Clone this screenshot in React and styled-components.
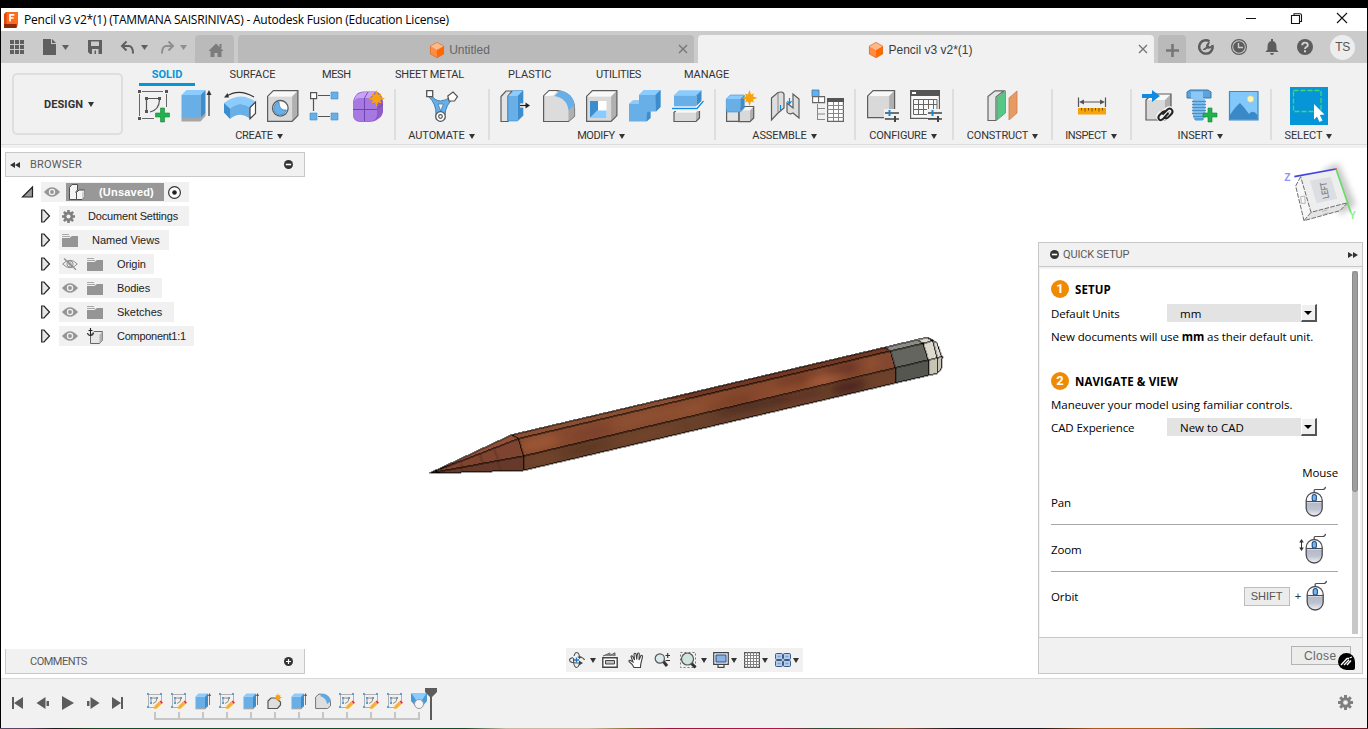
import React from "react";
import styled, { createGlobalStyle } from "styled-components";

const Global = createGlobalStyle`
  * { box-sizing: border-box; }
  body { margin: 0; font-family: "Liberation Sans", Arial, sans-serif; font-size: 11px; color: #333; overflow: hidden; }
  svg { display: block; flex: none; overflow: visible; }
`;

const UI = `Roboto, "Liberation Sans", sans-serif`;
const SEGOE = `"Open Sans", "Noto Sans", sans-serif`;

/* ---------- window ---------- */
const Window = styled.div`
  width: 1368px; height: 729px; display: flex; flex-direction: column;
  border-left: 1px solid #000; border-right: 1px solid #000; border-top: 8px solid #000;
  background: #fff;
`;
const TitleBar = styled.header`
  height: 23px; flex: none; display: flex; align-items: center; padding: 0 20px 0 3px; background: #fff;
`;
const Title = styled.div`
  font: 12px/23px ${SEGOE}; color: #000; letter-spacing: -0.21px; margin-left: 6px; flex: 1; white-space: nowrap;
`;
const WinButtons = styled.div`display: flex; align-items: center; gap: 35px; margin-top: -3px;`;

/* ---------- document tabs ---------- */
const TabBar = styled.div`
  height: 32px; flex: none; display: flex; align-items: flex-end; background: #cbcbcb;
`;
const QuickTools = styled.div`
  width: 194px; height: 32px; display: flex; align-items: center; padding-left: 9px;
`;
const Tool = styled.div`margin-left: ${(p) => p.$gap || 0}px; opacity: ${(p) => (p.$dim ? 0.55 : 1)};`;
const DocTab = styled.div`
  position: relative; width: ${(p) => p.$w}px; height: 28px; margin-right: 4px; border-radius: 4px 4px 0 0;
  background: ${(p) => (p.$active ? "#f1f1f1" : "#bababa")};
  display: flex; align-items: center; justify-content: center; gap: 5px;
  font-size: 12px; color: ${(p) => (p.$active ? "#3c3c3c" : "#666")};
  padding: 2px ${(p) => p.$shift || 0}px 0 0;
`;
const CloseMark = styled.div`position: absolute; right: 6px; top: 9px;`;
const Account = styled.div`display: flex; align-items: center; gap: 17px; height: 32px; margin-left: 8px;`;
const Avatar = styled.div`
  width: 25px; height: 25px; border-radius: 50%; background: #ededed; font: 12px/25px "Liberation Sans", sans-serif;
  color: #555; text-align: center; margin-left: 0; letter-spacing: -0.5px;
`;

/* ---------- ribbon ---------- */
const Ribbon = styled.section`
  height: 85px; flex: none; display: flex; background: #f1f1f1; border-bottom: 3px solid #f1f1f1;
  box-shadow: inset 0 -1px #dcdcdc;
`;
const DesignButton = styled.div`
  width: 111px; height: 62px; margin: 10px 6px 0 11px; border: 2px solid #dedede; border-radius: 5px;
  display: flex; align-items: center; justify-content: center; gap: 5px; font: bold 11px ${UI}; letter-spacing: 0.1px;
  padding-left: 3px;
`;
const RibbonMain = styled.div`flex: 1;`;
const RibbonTabs = styled.nav`display: flex; height: 24px; padding-left: 10px;`;
const RibbonTab = styled.div`
  width: ${(p) => p.$w}px; margin-right: ${(p) => p.$gap}px; height: 23px; text-align: center; white-space: nowrap;
  font: ${(p) => (p.$on ? "bold" : "normal")} 11px/24px ${UI}; letter-spacing: ${(p) => p.$ls || 0}px;
  color: ${(p) => (p.$on ? "#0696d7" : "#333")};
  border-bottom: ${(p) => (p.$on ? "3px solid #0696d7" : "none")};
`;
const Groups = styled.div`display: flex; padding-top: 2px;`;
const Group = styled.div`
  width: ${(p) => p.$w}px; height: 51px; border-right: ${(p) => (p.$last ? 0 : 2)}px solid #dedede;
  display: flex; flex-direction: column; align-items: center;
`;
const IconRow = styled.div`height: 32px; display: flex; align-items: center; gap: 11px; margin-top: 1px;`;
const GroupLabel = styled.div`
  display: flex; align-items: center; gap: 4px; font: 11px/14px ${UI}; letter-spacing: ${(p) => p.$ls ?? -0.1}px;
  margin: 7px ${(p) => p.$mr ?? 1}px 0 0; white-space: nowrap;
`;
const SelectTile = styled.div`width: 38px; height: 38px; background: #0696d7; margin: -2px 0 -2px;`;

/* ---------- canvas ---------- */
const Canvas = styled.main`position: relative; flex: 1; display: flex; background: #fff; overflow: hidden;`;
const Model = styled.div`position: absolute; left: 419px; top: 177px;`;
const LeftColumn = styled.aside`
  width: 304px; display: flex; flex-direction: column; padding: 4px 0 4px 4px;
`;
const PanelBar = styled.div`
  height: 25px; flex: none; display: flex; align-items: center; background: #f1f1f1; border: 1px solid #c8c8c8;
  border-top-width: ${(p) => (p.$open ? 0 : 1)}px; color: #5a5a5a; font: 11px ${UI}; padding: 0 11px 0 4px;
  letter-spacing: ${(p) => p.$ls || 0}px;
`;
const BarTitle = styled.div`flex: 1; margin-left: ${(p) => p.$x}px;`;
const Tree = styled.div`flex: 1; padding-top: 5px;`;
const TreeRow = styled.div`
  height: 20px; margin-bottom: 4px; display: flex; align-items: center; padding-left: ${(p) => p.$indent}px;
`;
const Chip = styled.div`
  width: ${(p) => p.$w}px; height: 20px; margin-left: ${(p) => p.$gap ?? 9}px; background: #f1f1f1;
  display: flex; align-items: center; padding-left: 3px; color: #222;
`;
const Unsaved = styled.div`
  width: 98px; height: 18px; margin: 0 4px 0 6px; background: #989898; color: #fff; font-weight: bold;
  display: flex; align-items: center; gap: 13px; padding-left: 3px; letter-spacing: 0.2px;
`;
const TreeLabel = styled.span`margin-left: ${(p) => p.$x}px; letter-spacing: ${(p) => p.$ls || 0}px; white-space: nowrap;`;
const FolderSlot = styled.div`margin-left: 9px;`;
const Center = styled.div`flex: 1; display: flex; align-items: flex-end; padding: 0 0 6px 261px;`;
const NavBar = styled.div`
  width: 237px; height: 24px; background: #f1f1f1; display: flex; align-items: center; padding-left: 3px;
`;
const NavItem = styled.div`width: ${(p) => p.$w}px; display: flex; align-items: center; gap: ${(p) => p.$gap ?? 5}px;`;
const RightColumn = styled.aside`width: 329px; display: flex; flex-direction: column;`;
const CubeArea = styled.div`height: 94px; flex: none; padding-top: 2px;`;

/* ---------- quick setup ---------- */
const Panel = styled.section`
  width: 325px; height: 432px; border: 1px solid #c8c8c8; background: #f1f1f1; display: flex; flex-direction: column;
`;
const PanelHead = styled.div`
  height: 24px; flex: none; display: flex; align-items: center; padding: 0 4px 0 11px; border-bottom: 1px solid #c8c8c8;
  font: 11px ${UI}; color: #5a5a5a; gap: 4px; letter-spacing: -0.15px;
`;
const PanelBody = styled.div`
  flex: 1; display: flex; margin: 2px 2px 0 1px; background: #fff; padding: 2px 2px 3px 11px;
  font: 11.5px/18px ${SEGOE}; color: #000; letter-spacing: -0.1px;
`;
const Form = styled.div`width: 287px; margin-right: 14px; padding-top: 9px;`;
const Scroll = styled.div`width: 6px; height: 363px; background: #c8c8c8;`;
const Thumb = styled.div`width: 6px; height: 221px; border-radius: 3px; background: #9e9e9e; border: 1px solid #8a8a8a;`;
const Heading = styled.div`
  height: 18px; display: flex; align-items: center; gap: 6px; margin-top: ${(p) => p.$top || 0}px;
`;
const HeadingText = styled.span`font-weight: bold; letter-spacing: 0.1px; padding-top: 2px;`;
const Num = styled.span`
  width: 18px; height: 18px; border-radius: 50%; background: #f08a00; color: #fff; text-align: center;
  font: bold 13px/18px ${UI};
`;
const Field = styled.div`height: 18px; margin-top: ${(p) => p.$top}px; display: flex; align-items: center; white-space: nowrap;`;
const FieldName = styled.span`width: 116px; line-height: 20px; padding-top: 1px;`;
const Select = styled.div`
  width: 150px; height: 18px; background: #e3e3e3; padding-left: 13px; display: flex; justify-content: space-between;
  line-height: 19px; letter-spacing: 0;
`;
const DropButton = styled.div`
  width: 16px; height: 18px; background: #f0f0f0; border: 1px solid #fff; border-right: 2px solid #555; border-bottom: 2px solid #555;
  display: flex; align-items: center; padding-left: 2px;
`;
const Note = styled.div`margin-top: ${(p) => p.$top}px; white-space: nowrap; letter-spacing: ${(p) => p.$ls}px;`;
const MouseHead = styled.div`margin-top: 28px; height: 18px; text-align: right;`;
const ControlRow = styled.div`
  height: 47px; display: flex; align-items: center; border-bottom: ${(p) => (p.$last ? 0 : 1)}px solid #a8a8a8;
  padding: 0 ${(p) => (p.$last ? 10 : 11)}px 0 0; margin-top: ${(p) => p.$top || 0}px;
`;
const ControlName = styled.div`flex: 1; padding-top: 3px;`;
const Key = styled.div`
  width: 46px; height: 19px; border: 1px solid #bdbdbd; background: #ececec; color: #555; text-align: center;
  font: 11px/17px "Liberation Sans", sans-serif; letter-spacing: 0; margin-top: 1px;
`;
const Plus = styled.div`margin: 1px 5px 0 5px; font: 11px "Liberation Sans", sans-serif; color: #333;`;
const PanelFoot = styled.div`
  height: 36px; flex: none; border-top: 1px solid #c8c8c8; display: flex; justify-content: flex-end;
  padding: 8px 11px 0 0; position: relative;
`;
const CloseButton = styled.div`
  width: 60px; height: 19px; border: 1px solid #b4b4b4; background: #ececec; color: #666;
  font: 12px/18px "Liberation Sans", sans-serif; padding-left: 12px; letter-spacing: 0.35px;
`;
const Badge = styled.div`
  position: absolute; right: 7px; top: 15px; width: 17px; height: 17px; background: #000; border-radius: 8.5px 8.5px 2px 8.5px;
  display: flex; align-items: center; justify-content: center;
`;

/* ---------- timeline ---------- */
const Timeline = styled.footer`
  height: 50px; flex: none; display: flex; background: #f1f1f1; border-top: 1px solid #d8d8d8; padding-left: 10px;
`;
const Playback = styled.div`display: flex; align-items: center; height: 47px; gap: 11.5px; width: 135px;`;
const Features = styled.div`flex: 1; padding: 14px 0 0 1px;`;
const FeatureRow = styled.div`position: relative; display: flex; gap: 8px;`;
const Marker = styled.div`position: absolute; left: 278px; top: -5px;`;
const Rail = styled.div`
  display: flex; justify-content: space-between; width: 266px; height: 8px; margin: 3px 0 0 7px; border-bottom: 2px solid #c6c6c6;
`;
const Tick = styled.div`width: 2px; height: 6px; background: #c6c6c6;`;
const GearSlot = styled.div`width: 29px; height: 47px; display: flex; align-items: center;`;
const Wallpaper = styled.div`
  height: 1px; flex: none; margin: 0 -1px;
  background: linear-gradient(90deg, #5c4566 0 2%, #1a1c1e 4%, #134a28 7% 34%, #c9b9a4 37% 43%, #8a7030 46%, #a0103f 49%, #b3124c 57%,
    #235032 60%, #7a4a35 66%, #14161c 70% 76%, #b45a12 80% 86%, #0f5a4a 89% 93%, #8f1d2c 97%, #6b1a24);
`;

/* ---------- small glyphs ---------- */
const Ico = ({ w = 32, h = 32, children, vb }) => (
  <svg width={w} height={h} viewBox={vb || `0 0 ${w} ${h}`}>{children}</svg>
);
const Caret = ({ w = 6, h = 5, c = "#333" }) => <Ico w={w} h={h}><path d={`M0 0H${w}L${w / 2} ${h}Z`} fill={c} /></Ico>;
const Cross = () => <Ico w={10} h={10}><path d="M1 1L9 9M9 1L1 9" stroke="#777" strokeWidth="1.4" /></Ico>;
const OrangeCube = () => (
  <Ico w={14} h={16}>
    <path d="M7 0L14 4L7 8L0 4Z" fill="#ffb98a" /><path d="M0 4L7 8V16L0 12Z" fill="#ff8c42" /><path d="M14 4L7 8V16L14 12Z" fill="#ff6a00" />
    <path d="M7 .4L13.6 4V12L7 15.6L.4 12V4Z" fill="none" stroke="#d9702a" strokeWidth=".7" />
  </Ico>
);
const Round = ({ plus }) => (
  <Ico w={9} h={9}><circle cx="4.5" cy="4.5" r="4.5" fill="#333" /><path d={plus ? "M2 4.5H7M4.5 2V7" : "M1.8 4.5H7.2"} stroke="#fff" strokeWidth={plus ? 1.2 : 1.6} /></Ico>
);
const Twin = ({ right }) => (
  <Ico w={10} h={6}><path d={right ? "M0 0L5 3L0 6ZM5 0L10 3L5 6Z" : "M10 0L5 3L10 6ZM5 0L0 3L5 6Z"} fill="#333" /></Ico>
);
const Gear = ({ s = 13 }) => (
  <Ico w={s} h={s} vb="0 0 14 14">
    <g fill="#7f7f7f">{[0, 45, 90, 135].map((a) => <rect key={a} x="5.6" y="0" width="2.8" height="14" transform={`rotate(${a} 7 7)`} />)}<circle cx="7" cy="7" r="5" /></g>
    <circle cx="7" cy="7" r="2.2" fill="#f1f1f1" />
  </Ico>
);
const Eye = ({ off }) => (
  <Ico w={16} h={12}>
    {off ? (
      <g fill="none" stroke="#8c8c8c"><path d="M.7 6Q8-1.5 15.3 6Q8 13.5 .7 6Z" /><circle cx="8" cy="6" r="3.1" /><circle cx="8" cy="6" r="1.2" /><path d="M2 .5L14 11.8" strokeWidth="1.2" /></g>
    ) : (
      <g><path d="M0 6Q8-3.4 16 6Q8 15.4 0 6Z" fill="#959595" /><circle cx="8" cy="6" r="3.2" fill="#f1f1f1" /><circle cx="8" cy="6" r="1.9" fill="#959595" /></g>
    )}
  </Ico>
);
const Folder = () => (
  <Ico w={16} h={13}><path d="M0 4H7.5L10 2H16V13H0Z" fill="#959595" /><path d="M0 0.5H7M0 2.5H8" stroke="#a8a8a8" /></Ico>
);
const Expand = () => <Ico w={10} h={14}><path d="M.7 1H3L8.500 7L3 13H.7Z" fill="#e6e6e6" stroke="#222" strokeWidth="1.2" /></Ico>;

const Star = ({ x, y, r = 8 }) => {
  const pts = Array.from({ length: 16 }, (_, i) => {
    const q = i % 2 ? r * 0.48 : i % 4 ? r * 0.78 : r;
    const a = (i * Math.PI) / 8;
    return `${(x + q * Math.sin(a)).toFixed(1)},${(y - q * Math.cos(a)).toFixed(1)}`;
  });
  return <polygon points={pts.join(" ")} fill="#f7a30a" />;
};
/* A box with a front face, a top face and a right face */
const Box3 = ({ x = 0, y = 0, w = 25, h = 26, d = 6, blue, line = true }) => {
  const [f, t, s] = blue ? ["#67afe6", "#8accff", "#3d8dcc"] : ["#d9d9d9", "#f8f8f8", "#b0b0b0"];
  return (
    <g>
      <path d={`M${x} ${y + d}H${x + w}V${y + d + h}H${x}Z`} fill={f} />
      <path d={`M${x} ${y + d}L${x + d} ${y}H${x + w + d}L${x + w} ${y + d}Z`} fill={t} />
      <path d={`M${x + w} ${y + d}L${x + w + d} ${y}V${y + h}L${x + w} ${y + d + h}Z`} fill={s} />
      {line && <path d={`M${x} ${y + d}L${x + d} ${y}H${x + w + d}V${y + h}L${x + w} ${y + d + h}H${x}Z`} fill="none" stroke={blue ? "#3d8dcc" : "#5c5c5c"} strokeWidth={blue ? 0.6 : 1.2} />}
    </g>
  );
};
const Add = ({ x, y }) => <path d={`M${x - 2} ${y - 7}h4v5h5v4h-5v5h-4v-5h-5v-4h5z`} fill="#22b14c" stroke="#128a38" strokeWidth=".6" />;
const Sliders = ({ x, y }) => (
  <g><path d={`M${x - 1} ${y - 4}h15v9h-15z`} fill="#f1f1f1" /><path d={`M${x} ${y}h14M${x} ${y + 6}h14`} stroke="#444" strokeWidth="1.4" /><path d={`M${x + 4.5} ${y - 3}v6`} stroke="#0e8be0" strokeWidth="2" /><path d={`M${x + 10} ${y + 3}v6`} stroke="#444" strokeWidth="2" /></g>
);

/* ---------- ribbon icons ---------- */
const SketchIcon = () => (
  <Ico>
    <path d="M1.5 4V26M4 1.5H25M28.5 4V17M4 28.5H16" stroke="#666" fill="none" />
    <g fill="#555"><path d="M0 0h3v3H0zM27 0h3v3h-3zM0 27h3v3H0zM7 7h3v3H7zM20 7h3v3h-3zM7 20h3v3H7z" /></g>
    <path d="M10 8.5H20M8.5 10V20M21.5 10Q21 20 12 22" stroke="#555" strokeWidth="1.2" fill="none" /><Add x={24.5} y={25} />
  </Ico>
);
const ExtrudeIcon = () => (
  <Ico><path d="M.5 28H19.5L24.5 22.5V26L19.5 31.5H.5Z" fill="#a6a6a6" /><Box3 x={0.5} y={0} w={19} h={23} d={5} blue line={false} /><path d="M28 4V26" stroke="#333" strokeWidth="1.2" /><path d="M28 0L30.5 5H25.5Z" fill="#333" /></Ico>
);
const RevolveIcon = () => (
  <Ico>
    <path d="M2 6.5Q15-2 30 7" fill="none" stroke="#333" strokeWidth="1.1" /><path d="M0 7.5L3.5 3L5 7.5Z" fill="#333" />
    <path d="M0 13Q16 .5 32 12L26 17.5Q16 10 6 18.5Z" fill="#8accff" /><path d="M0 13L6 18.5V29L0 22.5Z" fill="#3d8dcc" />
    <path d="M6 18.5Q16 10 26 17.5V28.5Q16 21 6 29Z" fill="#67afe6" /><path d="M26 17.5L31.5 12V23.5L26 28.8Z" fill="#fff" stroke="#444" strokeWidth="1.2" />
  </Ico>
);
const HoleIcon = () => (
  <Ico><Box3 x={0.6} y={0.6} w={24.5} h={25} d={5.8} /><circle cx="13.3" cy="18.3" r="7.8" fill="#fff" stroke="#5c5c5c" strokeWidth="1.3" /><path d="M12 12A6.5 6.5 0 1 0 19.5 20Q12 21 12 12Z" fill="#67afe6" stroke="#3080c0" strokeWidth=".7" /></Ico>
);
const PatternIcon = () => (
  <Ico><path d="M8 5.5H20M3.5 9V21M8 26.5H20" stroke="#555" strokeWidth="1.2" /><path d="M.6 2.6h6v6h-6z" fill="#fff" stroke="#555" strokeWidth="1.2" /><path d="M21 2h7v7h-7zM0 23h7v7H0zM21 23h7v7h-7z" fill="#67afe6" stroke="#3d8dcc" strokeWidth=".6" /></Ico>
);
const FormIcon = () => (
  <Ico><path d="M5 3Q8 1 13 1.5H23Q30 4 30 12V22Q29 27 25 29Q22 32 15 32H8Q0 32 0 24V14Q0 7 5 3Z" fill="#8e5cc9" /><path d="M0 15Q0 8 7 8H17Q24 9 24 16V25Q23 31 16 31.5H8Q0 31 0 24Z" fill="#a678e2" /><path d="M5 4Q8 2 13 2H22Q19 7 16 8H7Q3 8 1 11Q2 6 5 4Z" fill="#c9a4f5" /><path d="M11.5 8V31M0 19.5H24L30 14M11.5 8L15 2" stroke="#6c3fa8" strokeWidth=".9" fill="none" /><Star x={23.5} y={8.5} r={8.5} /></Ico>
);
const AutomateIcon = () => (
  <Ico><path d="M4.500 4.500Q9 11 14.500 11Q20 11 26 5.500L28 8.500Q19.500 14 19 25H10Q10.500 14 3 7Z" fill="#67afe6" stroke="#3d7fb5" strokeWidth="1" /><path d="M12 14H17.5L14.700 21Z" fill="#f1f1f1" stroke="#3d7fb5" strokeWidth=".8" /><circle cx="14.500" cy="26.500" r="4.800" fill="#fff" stroke="#555" strokeWidth="1.300" /><circle cx="14.500" cy="26.500" r="1.800" fill="none" stroke="#555" strokeWidth="1.200" /><path d="M.7.7h6v6h-6z" fill="#fff" stroke="#555" strokeWidth="1.300" /><path d="M27 2L31.500 6.500L28.500 11H23L21.800 6Z" fill="#fff" stroke="#555" strokeWidth="1.200" /></Ico>
);
const PressIcon = () => (
  <Ico><path d="M1 6.500L6 1H12L8 6V31.500H1Z" fill="#e3e3e3" stroke="#5c5c5c" strokeWidth="1.200" /><Box3 x={8} y={0.500} w={9.500} h={25} d={5.500} blue /><path d="M20 15.500H27" stroke="#fff" strokeWidth="4" /><path d="M20 15.500H27" stroke="#222" strokeWidth="1.300" /><path d="M30 15.500L25.500 12.500V18.500Z" fill="#222" /></Ico>
);
const FilletIcon = () => (
  <Ico><path d="M.6 6L6 .7H14Q31 3 31.500 19V26L25.500 31.500H.6Z" fill="#dcdcdc" stroke="#5c5c5c" strokeWidth="1.200" /><path d="M25.500 20L31.500 15V26L25.500 31.500Z" fill="#b0b0b0" /><path d="M1.200 6L6 1.200H14L10 5.500Z" fill="#fff" /><path d="M17 .6Q30 3 31.500 15L25.500 20.500Q24 8 11.500 6Z" fill="#67afe6" /></Ico>
);
const ShellIcon = () => (
  <Ico><Box3 x={0.600} y={0.600} w={24.500} h={25} d={5.800} /><path d="M4 11H20.500V28H4Z" fill="#fff" /><path d="M4 11H12V21L4 28Z" fill="#3d8dcc" /><path d="M4 28L11 20.500H20.500V28Z" fill="#8accff" /></Ico>
);
const CombineIcon = () => (
  <Ico><path d="M0 14L4 10.500H10V5L15 0H31.500V17L27 21.500H21.500V28L17.500 31.500H0Z" fill="#67afe6" /><path d="M10 5L15 0H31.500L26.500 5ZM0 14L4 10.500H10V14Z" fill="#8accff" /><path d="M26.500 5L31.500 0V17L27 21.500ZM18 22.500L21.500 21.500V28L17.500 31.500Z" fill="#3d8dcc" /></Ico>
);
const SplitIcon = () => (
  <Ico><Box3 x={2} y={19} w={22} h={9} d={3.500} /><path d="M0 16H30V21H0Z" fill="#f1f1f1" /><Box3 x={2} y={0.300} w={22.500} h={11} d={5} blue line={false} /><path d="M0 18.500H24L31.500 11" fill="none" stroke="#fff" strokeWidth="3" /><path d="M0 18.500H25L31.500 11" fill="none" stroke="#0e8be0" strokeWidth="1.300" /></Ico>
);
const NewCompIcon = () => (
  <Ico><Box3 x={13} y={16.500} w={11} h={11.500} d={3.700} /><path d="M.6 19.500H12.800V31.300H.6Z" fill="#e3e3e3" stroke="#5c5c5c" strokeWidth="1.200" /><Box3 x={0.300} y={5} w={14} h={13} d={4} blue /><Star x={23.500} y={8} r={8} /></Ico>
);
const JointIcon = () => (
  <Ico><path d="M2.500 8L9 2.500Q14 1 15 4V18L9 23L2.500 30Z" fill="#dedede" stroke="#5c5c5c" strokeWidth="1.200" /><path d="M9 3V22" stroke="#888" /><path d="M30 9L24 4V18L18 13V22Q20 25 24 23L30 28Z" fill="#dedede" stroke="#5c5c5c" strokeWidth="1.200" /><path d="M11.500 15V20M20.500 8V13M18.500 11L20.500 14L22.500 11" stroke="#0e8be0" strokeWidth="1.200" fill="none" /></Ico>
);
const BomIcon = () => (
  <Ico><path d="M0 0h7v6.500H0z" fill="#67afe6" stroke="#2c7dbf" strokeWidth=".8" /><path d="M.6 6.600h6v6h-6zM6.600 6.600h6v6h-6z" fill="#fff" stroke="#666" strokeWidth="1.100" /><path d="M5.500 14V30M5.500 18.500H13M5.500 24H13M5.500 29.500H13" stroke="#888" fill="none" /><path d="M15.600 8.600H31.400V31.400H15.600Z" fill="#fff" stroke="#666" strokeWidth="1.200" /><path d="M15 8H32V12H15Z" fill="#555" /><path d="M15 15.500H32M15 19.500H32M15 23.500H32M15 27.500H32M21.500 12V31M26.500 12V31" stroke="#888" fill="none" /></Ico>
);
const ConfigIcon = () => <Ico><Box3 x={0.600} y={0.600} w={21.500} h={21.500} d={5.500} /><Sliders x={18} y={23} /></Ico>;
const ConfigTableIcon = () => (
  <Ico><path d="M.6 .6H29.400V28.400H.6Z" fill="#f8f8f8" stroke="#5c5c5c" strokeWidth="1.200" /><path d="M0 0H30V6H0Z" fill="#555" /><path d="M2 2h4v2H2z" fill="#fff" /><path d="M3.500 9.500H27V24.500H3.500ZM3.500 14.500H27M3.500 19.500H27M8.500 9.500V24.500M13.500 9.500V24.500M18.500 9.500V24.500M23.500 9.500V24.500" stroke="#666" fill="none" /><Sliders x={18} y={23} /></Ico>
);
const PlaneIcon = () => (
  <Ico><path d="M1 6.500L8 .8H17L9 7V30.500H1Z" fill="#e6e6e6" stroke="#666" strokeWidth="1.200" /><path d="M10 8L18.500 1V23L10 30Z" fill="#57c785" stroke="#3da868" strokeWidth=".8" /><path d="M22 8L30 1V23L22 30Z" fill="#e89a65" stroke="#cf7c45" strokeWidth=".8" /></Ico>
);
const MeasureIcon = () => (
  <Ico w={28} h={32}><path d="M.5 7.500V17M27.500 7.500V17M4 12H24" stroke="#555" strokeWidth="1.200" /><path d="M1 12L6 9.500V14.500ZM27 12L22 9.500V14.500Z" fill="#555" /><path d="M0 18H28V24.500H0Z" fill="#f7a30a" /><path d="M3.500 18v2.500M7 18v3.500M10.500 18v2.500M14 18v3.500M17.500 18v2.500M21 18v3.500M24.500 18v2.500" stroke="#7a5500" strokeWidth="1" /></Ico>
);
const LinkIcon = () => (
  <Ico><Box3 x={4} y={4} w={19} h={20} d={6} /><path d="M0 4H10V0L18 6L10 12V8H0Z" fill="#0e8be0" /><g fill="none"><path d="M20.500 24L24.500 20Q28 17 30 20Q31.500 22 29 24.500L27 26.500M25.500 23.500L21.500 28Q18.500 30 17 28Q16 26 18 24L19.500 22.500" stroke="#f1f1f1" strokeWidth="5" /><path d="M20.500 24.500L25 20Q28 17 30 20Q31.500 22 29 24.500L26 27.500Q24 29 22.500 27.500M26.500 23L21.500 28.500Q18.500 31.500 16.800 29Q15.500 27 18 24.500L21 21.800Q23 20.500 24.500 22" stroke="#222" strokeWidth="2" /></g></Ico>
);
const BoltIcon = () => (
  <Ico><path d="M2 2L5 0H23L26 2V8H2Z" fill="#5da3d8" stroke="#3878ab" strokeWidth="1" /><path d="M6 1.500H18V8H6Z" fill="#8cc8f5" /><path d="M8 8H20V27L17.500 31H10.500L8 27Z" fill="#8cc8f5" /><path d="M7 11.500H21M7 14.500H21M7 17.500H21M7 20.500H21M7 23.500H21M8 26.500H20M9.500 29H18.500" stroke="#4a8fc7" strokeWidth="1.300" /><Add x={25} y={25} /></Ico>
);
const DecalIcon = () => (
  <Ico><path d="M1.500 1.500H30V30H1.500Z" fill="#82c8fb" stroke="#3a8bc9" strokeWidth="1.200" /><path d="M2 25Q7 17 12 13Q16 17 21 24Q25 19 29.500 25V29.500H2Z" fill="#3a88c5" /><circle cx="22.500" cy="9" r="3.200" fill="#fdf6bd" stroke="#e0cf6a" strokeWidth=".6" /></Ico>
);
const SelectIcon = () => (
  <Ico w={38} h={38}><path d="M3.500 3.500H31V24.500H3.500Z" fill="none" stroke="#43d676" strokeWidth="1.300" strokeDasharray="5 2" /><path d="M24 17L34.500 27.500L29.800 28L32.500 33.500L29.500 35L27 29.500L24 32.500Z" fill="#fff" /></Ico>
);

const GROUPS = [
  { name: "CREATE", w: 267, ls: -0.35, mr: 5, icons: [SketchIcon, ExtrudeIcon, RevolveIcon, HoleIcon, PatternIcon, FormIcon] },
  { name: "AUTOMATE", w: 94, ls: -0.1, mr: 1, icons: [AutomateIcon] },
  { name: "MODIFY", w: 226, ls: -0.4, mr: 2, icons: [PressIcon, FilletIcon, ShellIcon, CombineIcon, SplitIcon] },
  { name: "ASSEMBLE", w: 140, icons: [NewCompIcon, JointIcon, BomIcon] },
  { name: "CONFIGURE", w: 98, ls: -0.2, mr: 2, icons: [ConfigIcon, ConfigTableIcon] },
  { name: "CONSTRUCT", w: 99, ls: -0.2, mr: 0, icons: [PlaneIcon] },
  { name: "INSPECT", w: 79, ls: -0.35, mr: 1, icons: [MeasureIcon] },
  { name: "INSERT", w: 140, icons: [LinkIcon, BoltIcon, DecalIcon] },
];
const TABS = [
  ["SOLID", 56, 34, 0], ["SURFACE", 47, 46, 0], ["MESH", 28, 45, -0.4], ["SHEET METAL", 68, 45, -0.2],
  ["PLASTIC", 42, 46, 0], ["UTILITIES", 44, 44, -0.3], ["MANAGE", 45, 0, -0.1],
];

/* ---------- tree ---------- */
const CubesIcon = () => (
  <Ico w={17} h={16}><g fill="#f4f4f4" stroke="#4d4d4d" strokeLinejoin="round"><path d="M.5 3.500L3 .5H8.500V6L6.500 8H.5Z" /><path d="M.5 8.500H7.500V15.500H.5Z" /><path d="M7.500 8.500L10 6H15.500V12.500L13 15.500H7.500Z" /></g><path d="M1 4.500H6.500V15H1Z" fill="#f4f4f4" /><path d="M13 8.500L15.500 6V12.500L13 15.500Z" fill="#cfcfcf" /></Ico>
);
const AnchorBox = () => (
  <Ico w={17} h={16}><path d="M3.500 7.500L7 3.500H15.500V12L12.500 15.500H3.500Z" fill="#e6e6e6" stroke="#666" /><path d="M12.500 7L15.500 3.500V12L12.500 15.500Z" fill="#b0b0b0" /><path d="M3.500 0V7.500M1.500 2.500H5.500M.5 5Q1 7.500 3.500 7.500Q6 7.500 6.500 5" fill="none" stroke="#222" strokeWidth="1.100" /></Ico>
);
const TREE = [
  { label: "Document Settings", w: 130, icon: "gear", x: 13, ls: -0.17 },
  { label: "Named Views", w: 110, icon: "folder", x: 14, ls: 0 },
  { label: "Origin", w: 95, eye: "off", icon: "folder", x: 14, ls: -0.1 },
  { label: "Bodies", w: 103, eye: "on", icon: "folder", x: 14, ls: -0.1 },
  { label: "Sketches", w: 115, eye: "on", icon: "folder", x: 14 },
  { label: "Component1:1", w: 135, eye: "on", icon: "box", x: 13, ls: -0.28 },
];

/* ---------- model ---------- */
const BODY = "M265 330L1350 67L1366 78L1381 131V174L301 436L301 393L286 341Z";
const Streak = ({ x, y, rx, ry, c, o = 0.6 }) => <ellipse cx={x} cy={y} rx={rx} ry={ry} fill={c} opacity={o} transform={`rotate(-13.600 ${x} ${y})`} />;
const Pencil = () => (
  <svg width="540" height="160" viewBox="0 0 1568 480" preserveAspectRatio="none" shapeRendering="crispEdges">
    <defs>
      <clipPath id="upper"><path d="M286 341L1366 78L1381 131L301 393Z" /></clipPath>
      <clipPath id="lower"><path d="M301 393L1381 131V174L301 436Z" /></clipPath>
      <filter id="soft" x="-30%" y="-100%" width="160%" height="300%"><feGaussianBlur stdDeviation="12" /></filter>
    </defs>
    <path d={BODY} fill="#7c4129" />
    <path d="M265 330L1350 67L1366 78L286 341Z" fill="#8a4e32" />
    <path d="M700 225L1350 67L1366 78L800 216Z" fill="#713824" />
    <g clipPath="url(#upper)">
      <path d="M286 341L1366 78L1381 131L301 393Z" fill="#864a2e" />
      <g filter="url(#soft)">
        <Streak x={345} y={355} rx={60} ry={20} c="#a35b3a" o={0.8} /><Streak x={500} y={325} rx={60} ry={20} c="#783c2b" />
        <Streak x={640} y={280} rx={90} ry={16} c="#965535" /><Streak x={800} y={250} rx={100} ry={16} c="#985534" />
        <Streak x={930} y={225} rx={110} ry={10} c="#6d3120" /><Streak x={1100} y={165} rx={70} ry={20} c="#6b3222" />
        <Streak x={1045} y={200} rx={90} ry={12} c="#9c5434" /><Streak x={1175} y={165} rx={55} ry={11} c="#b56643" o={0.9} />
        <Streak x={1240} y={130} rx={70} ry={18} c="#613023" o={0.7} /><Streak x={1310} y={115} rx={45} ry={12} c="#a05a38" />
        <Streak x={1350} y={115} rx={30} ry={20} c="#7e4530" />
      </g>
    </g>
    <g clipPath="url(#lower)">
      <path d="M301 393L1381 131V174L301 436Z" fill="#69402a" />
      <g filter="url(#soft)">
        <Streak x={350} y={405} rx={50} ry={16} c="#7c4a2e" /><Streak x={480} y={370} rx={70} ry={14} c="#563022" />
        <Streak x={660} y={330} rx={100} ry={13} c="#79492c" /><Streak x={960} y={240} rx={110} ry={16} c="#4b291f" o={0.8} />
        <Streak x={1100} y={218} rx={80} ry={14} c="#50241d" /><Streak x={1110} y={235} rx={70} ry={8} c="#804a31" />
        <Streak x={1245} y={185} rx={50} ry={20} c="#4b251c" o={0.9} /><Streak x={1350} y={165} rx={50} ry={14} c="#78432b" />
      </g>
    </g>
    <path d="M27 445L265 330L286 341Z" fill="#925038" /><path d="M27 445L286 341L301 393Z" fill="#7f4430" /><path d="M27 445L301 393V436Z" fill="#67392a" />
    <path d="M215 372L228 406M175 388L182 416M120 412L122 440M225 410L235 437" stroke="#5a2e22" strokeWidth="7" opacity=".45" />
    <path d="M1350 67L1445 44L1461 55L1366 78Z" fill="#8b8c84" /><path d="M1366 78L1461 55L1476 107L1381 131Z" fill="#64655f" /><path d="M1381 131L1476 107V151L1381 174Z" fill="#55564f" />
    <path d="M1445 44L1472 37L1500 50L1517 94L1514 135L1502 145L1476 151V107L1461 55Z" fill="#dcdacd" />
    <path d="M1476 107L1517 97L1514 135L1502 145L1476 151Z" fill="#c5c4b5" />
    <g fill="none" stroke="#000" strokeWidth="2.900">
      <path d="M27 445L265 330L1350 67L1472 37L1490 46L1502 54L1514 94" /><path d="M27 445L286 341L1461 55L1490 47" /><path d="M27 445L301 393L1517 95" /><path d="M27 445L301 436L1381 174L1476 151L1502 145L1513 135L1517 95" />
      <path d="M265 330L286 341L301 393V436M1350 67L1366 78L1381 131V174M1445 44L1461 55L1476 107V151M1472 37L1490 50L1502 100V145" />
    </g>
  </svg>
);
const ViewCube = () => (
  <svg width="328" height="80" viewBox="24 0 984 240">
    <defs><filter id="shade" x="-50%" y="-50%" width="200%" height="200%"><feGaussianBlur stdDeviation="9" /></filter></defs>
    <path d="M880 60L925 40L978 165L930 195Z" fill="#999" opacity=".55" filter="url(#shade)" />
    <path d="M812 80L918 57L953 158L843 187Z" fill="#eeeeef" /><path d="M812 80L797 108L822 212L843 187Z" fill="#f7f7f7" /><path d="M843 187L953 158L930 182L822 212Z" fill="#e4e4e4" />
    <path d="M840 92L902 80L922 146L860 160Z" fill="#dcdee2" />
    <path d="M812 80L797 108L822 212L930 182L953 158L843 187L812 80M843 187L822 212" fill="none" stroke="#6d6d6d" strokeWidth="3" strokeDasharray="14 4" />
    <text x="0" y="0" transform="translate(898 144) rotate(-101)" fontFamily="Liberation Sans, sans-serif" fontSize="29" fontWeight="bold" fill="#85898f" textLength="50" lengthAdjust="spacingAndGlyphs">LEFT</text>
    <path d="M812 140L824 138L826 160L814 160ZM876 184L892 180M878 194L896 188" fill="none" stroke="#b5b5b5" strokeWidth="3" />
    <path d="M793 80L918 57" stroke="#4444e0" strokeWidth="5" /><path d="M918 57L963 188" stroke="#68dd68" strokeWidth="5" /><circle cx="918" cy="57" r="3" fill="#f55" />
    <g fontFamily="Liberation Sans, sans-serif" fontWeight="bold"><text x="763" y="94" fontSize="31" fill="#9292f4">Z</text><text x="958" y="206" fontSize="30" fill="#90ee90">Y</text></g>
  </svg>
);

const MouseIcon = ({ zoom }) => (
  <Ico w={zoom ? 28 : 22} h={31} vb={zoom ? "-6 0 28 31" : "0 0 22 31"}>
    <defs><linearGradient id="mg" x1="0" x2="0" y1="0" y2="1"><stop offset="0" stopColor="#fff" /><stop offset=".4" stopColor="#f5f5f8" /><stop offset=".45" stopColor="#b4bac8" /><stop offset=".7" stopColor="#bcc2ce" /><stop offset="1" stopColor="#f2f3f7" /></linearGradient></defs>
    <rect x="1.200" y="6.500" width="16" height="23.500" rx="8" fill="url(#mg)" stroke="#4a4d54" strokeWidth="1.300" />
    <path d="M1.200 15.500H17.200" stroke="#4a4d54" strokeWidth="1" /><path d="M9.200 7V4Q9.200 3.500 11 3.500H17.500Q20 3.500 20.500 .8" fill="none" stroke="#4a4d54" strokeWidth="1.200" />
    <rect x="7.200" y="8.500" width="4.200" height="6.500" rx="2.100" fill="#6fb6fa" stroke="#28507c" strokeWidth="1.100" />
    {zoom && <g><path d="M-3.500 8V17" stroke="#333" /><path d="M-3.500 6L-1.200 9.500H-5.800ZM-3.500 18L-1.200 14.500H-5.800Z" fill="#333" /></g>}
  </Ico>
);

/* ---------- timeline icons ---------- */
const TSketch = () => (
  <Ico w={16} h={16}><path d="M1 1.500H14M1.500 1V14M14.500 2V8M2 14.500H8" fill="none" stroke="#b0b0b0" /><g fill="#5f9fd0"><path d="M0 0h2v2H0zM13 0h2v2h-2zM0 13h2v2H0zM3 4h2v2H3zM9 4h2v2H9zM3 9h2v2H3z" /></g><path d="M5 5H10Q10 9.500 6 10.500M4 6V9" fill="none" stroke="#8a8a8a" /><path d="M7.500 13L12 8.500L14.500 11L10 15.500L7 16Z" fill="#f5b13d" /><path d="M12.500 8.500L13.800 7.500L16 9.500L14.500 11Z" fill="#dd3b3b" /></Ico>
);
const TExtrude = () => <Ico w={16} h={16}><Box3 x={0.500} y={0.500} w={9.500} h={12} d={3} blue line={false} /><path d="M0.500 15.800H10L13 13" stroke="#999" fill="none" /><path d="M14.500 2V12" stroke="#777" fill="none" /><path d="M14.500 0L16 3H13Z" fill="#555" /></Ico>;
const TComp = () => <Ico w={16} h={16}><path d="M1 8L4 5H9L13.500 9V12L10.500 15.500H1Z" fill="#dedede" stroke="#555" strokeWidth="1.200" /><Star x={11} y={4.500} r={4.500} /></Ico>;
const TFillet = () => <Ico w={16} h={16}><path d="M.6 4L4 1Q15 1 15.500 9V13L12.500 15.500H.6Z" fill="#dedede" stroke="#777" /><path d="M8 .5Q15 2 15.500 8.500L12 11Q11.500 5 5 3Z" fill="#5fa9e2" /></Ico>;
const TChamfer = () => <Ico w={16} h={16}><path d="M0 .5H16V8L11 14H5L0 8Z" fill="#4a9ad8" /><path d="M1 1H15L11 7H5Z" fill="#8accff" /><circle cx="8" cy="11" r="4.500" fill="#f4f4f4" stroke="#999" /></Ico>;
const FEATURES = [TSketch, TSketch, TExtrude, TSketch, TExtrude, TComp, TExtrude, TFillet, TSketch, TSketch, TSketch, TChamfer];

export default function App() {
  return (
    <Window>
      <Global />
      <TitleBar>
        <Ico w={14} h={16}><path d="M2 0H13.500V14L12 16H0V2Z" fill="#d9480f" /><path d="M2.500 0H14V12H2.500Z" fill="#ff6b1a" /><path d="M0 12H12.500V16H0Z" fill="#8a2c0a" /><path d="M6 9.500V2.800H10.300M6 6H9.700" stroke="#fff" strokeWidth="1.700" fill="none" /></Ico>
        <Title>Pencil v3 v2*(1) (TAMMANA SAISRINIVAS) - Autodesk Fusion (Education License)</Title>
        <WinButtons>
          <Ico w={10} h={10}><path d="M0 5.500H10" stroke="#111" /></Ico>
          <Ico w={11} h={11}><path d="M.5 2.500h8v8h-8zM3 2.500V.7H9Q10.500 .7 10.500 2.200V8.500H8.500" fill="none" stroke="#111" strokeWidth="1.100" /></Ico>
          <Ico w={10} h={10}><path d="M0 0L10 10M10 0L0 10" stroke="#111" strokeWidth="1.100" /></Ico>
        </WinButtons>
      </TitleBar>

      <TabBar>
        <QuickTools>
          <Ico w={14} h={14}><path d="M0 0h4v4H0zM5 0h4v4H5zM10 0h4v4h-4zM0 5h4v4H0zM5 5h4v4H5zM10 5h4v4h-4zM0 10h4v4H0zM5 10h4v4H5zM10 10h4v4h-4z" fill="#5f5f5f" /></Ico>
          <Tool $gap={19}><Ico w={13} h={16}><path d="M0 0H8V5H13V16H0Z" fill="#5f5f5f" /><path d="M9 0L13 4H9Z" fill="#5f5f5f" /></Ico></Tool>
          <Tool $gap={6}><Caret w={7} c="#5f5f5f" /></Tool>
          <Tool $gap={19}><Ico w={14} h={14}><path d="M0 0H14V14H2L0 12Z" fill="#5f5f5f" /><path d="M3 1.500H11V6H3ZM4 9H10.500V14H8V10.500H6.500V14H4Z" fill="#cbcbcb" /></Ico></Tool>
          <Tool $gap={19}><Ico w={13} h={13}><path d="M1 5H8Q12 5.500 12 12.500" fill="none" stroke="#5f5f5f" strokeWidth="2" /><path d="M5.500 .5L1 5L5.500 9.500" fill="none" stroke="#5f5f5f" strokeWidth="2" /></Ico></Tool>
          <Tool $gap={7}><Caret w={7} c="#5f5f5f" /></Tool>
          <Tool $gap={13} $dim><Ico w={13} h={13}><path d="M12 5H5Q1 5.500 1 12.500" fill="none" stroke="#5f5f5f" strokeWidth="2" /><path d="M7.500 .5L12 5L7.500 9.500" fill="none" stroke="#5f5f5f" strokeWidth="2" /></Ico></Tool>
          <Tool $gap={6} $dim><Caret w={7} c="#5f5f5f" /></Tool>
        </QuickTools>
        <DocTab $w={39}><Ico w={16} h={12} vb="-2 -1 16 12"><path d="M7-1.500L14.500 6H12.500V12H8.500V8H5.500V12H1.500V6H-.5Z" fill="#7c7c7c" /><path d="M10.500-1H12.500V3H10.500Z" fill="#7c7c7c" /></Ico></DocTab>
        <DocTab $w={456} $shift={12}><OrangeCube />Untitled<CloseMark><Cross /></CloseMark></DocTab>
        <DocTab $w={456} $active $shift={10}><OrangeCube />Pencil v3 v2*(1)<CloseMark><Cross /></CloseMark></DocTab>
        <DocTab $w={28}><Ico w={13} h={13}><path d="M6.500 0V13M0 6.500H13" stroke="#777" strokeWidth="2.600" /></Ico></DocTab>
        <Account>
          <Ico w={16} h={16}><path d="M11.500 2.300A6.700 6.700 0 1 0 14.300 6" fill="none" stroke="#5c5c5c" strokeWidth="2.400" /><path d="M4.500 10.500Q7 12 9 9.500Q12 10.500 14 8Q15.500 6 13.500 7L11.500 7.500L10.500 6.500L12 3.500Q11 2.500 9.500 4Q7.500 6 8 8Z" fill="#5c5c5c" /></Ico>
          <Ico w={16} h={16}><circle cx="8" cy="8" r="7.400" fill="none" stroke="#5c5c5c" strokeWidth="1.200" /><circle cx="8" cy="8" r="5.800" fill="#5c5c5c" /><path d="M7.500 4V8.500H12" fill="none" stroke="#cbcbcb" strokeWidth="1.400" /></Ico>
          <Ico w={16} h={16}><path d="M7 0H9V2Q12.500 3 12.500 8V10.500L14.500 13H1.500L3.500 10.500V8Q3.500 3 7 2ZM6 14H10Q9.500 16 8 16Q6.500 16 6 14Z" fill="#5c5c5c" /></Ico>
          <Ico w={16} h={16}><circle cx="8" cy="8" r="8" fill="#5c5c5c" /><path d="M5.200 6.300Q5.200 3.600 8 3.600Q10.800 3.600 10.800 6Q10.800 7.300 9.300 8Q8 8.700 8 10" fill="none" stroke="#d5d5d5" strokeWidth="1.900" /><path d="M7 11.200h2v2H7z" fill="#d5d5d5" /></Ico>
          <Avatar>TS</Avatar>
        </Account>
      </TabBar>

      <Ribbon>
        <DesignButton>DESIGN <Caret /></DesignButton>
        <RibbonMain>
          <RibbonTabs>
            {TABS.map(([t, w, gap, ls], i) => <RibbonTab key={t} $w={w} $gap={gap} $ls={ls} $on={i === 0}>{t}</RibbonTab>)}
          </RibbonTabs>
          <Groups>
            {GROUPS.map((g) => (
              <Group key={g.name} $w={g.w}>
                <IconRow>{g.icons.map((I, i) => <I key={i} />)}</IconRow>
                <GroupLabel $ls={g.ls} $mr={g.mr}>{g.name}<Caret /></GroupLabel>
              </Group>
            ))}
            <Group $w={74} $last>
              <IconRow><SelectTile><SelectIcon /></SelectTile></IconRow>
              <GroupLabel>SELECT<Caret /></GroupLabel>
            </Group>
          </Groups>
        </RibbonMain>
      </Ribbon>

      <Canvas>
        <Model><Pencil /></Model>
        <LeftColumn>
          <PanelBar $ls={0.2}><Twin /><BarTitle $x={10}>BROWSER</BarTitle><Round /></PanelBar>
          <Tree>
            <TreeRow $indent={17}>
              <Ico w={12} h={12}><path d="M10.500 1V11H.5Z" fill="#999" stroke="#222" strokeWidth="1.200" /></Ico>
              <Chip $w={148} $gap={7}><Eye /><Unsaved><CubesIcon />(Unsaved)</Unsaved>
                <Ico w={13} h={13}><circle cx="6.500" cy="6.500" r="5.900" fill="#fff" stroke="#333" strokeWidth="1.200" /><circle cx="6.500" cy="6.500" r="2.300" fill="#222" /></Ico></Chip>
            </TreeRow>
            {TREE.map((r) => (
              <TreeRow key={r.label} $indent={36}>
                <Expand />
                <Chip $w={r.w} $gap={8}>
                  {r.eye && <Eye off={r.eye === "off"} />}
                  {r.eye ? <FolderSlot>{r.icon === "box" ? <AnchorBox /> : <Folder />}</FolderSlot> : r.icon === "gear" ? <Gear /> : <Folder />}
                  <TreeLabel $x={r.x} $ls={r.ls}>{r.label}</TreeLabel>
                </Chip>
              </TreeRow>
            ))}
          </Tree>
          <PanelBar $open $ls={-0.5}><BarTitle $x={20}>COMMENTS</BarTitle><Round plus /></PanelBar>
        </LeftColumn>

        <Center>
          <NavBar>
            <NavItem $w={33}><Ico w={16} h={16}><g fill="none" stroke="#555" strokeWidth="1.100"><path d="M4 5.500Q.5 6.500 .5 8Q.5 11 8 11H11M11 5Q15 6 15.500 8" /><path d="M5 4Q6 .5 7.500 .5Q10 .5 10.500 5M10.500 11Q9.500 15.500 7.500 15.500Q5 15.500 4.500 9V6" /></g><path d="M7.500 5.500V10.500M5 8H10" stroke="#1b78d0" strokeWidth="1.300" /><path d="M10 8.500V13.500L14 11ZM8.500 4.500H12.500L10.500 7Z" fill="#444" /></Ico><Caret /></NavItem>
            <NavItem $w={26}><Ico w={16} h={16}><path d="M.8 5.800H15.200V15.200H.8Z" fill="#fff" stroke="#444" strokeWidth="1.400" /><path d="M3.500 8.500h9v3.500h-9z" fill="#b9c2c8" stroke="#444" /><path d="M1 4L8 1V3.500L13 .8V4" fill="#888" stroke="#666" /></Ico></NavItem>
            <NavItem $w={26}><Ico w={17} h={16}><path d="M6 15.500Q5 12.500 1 9.500Q.5 8 2.500 8.500L5 10L3 4.500Q3.500 3 4.800 4.500L6.500 8L6 2Q7 .5 8 2L8.700 7.500L9.500 1.500Q11 .3 11.300 2L11 8L13 3.500Q14.700 3 14.500 5L13 11Q12.500 13 12.500 15.500Z" fill="#fff" stroke="#444" strokeWidth="1.100" /></Ico></NavItem>
            <NavItem $w={26}><Ico w={17} h={16}><path d="M9 9L13 14" stroke="#333" strokeWidth="3" /><circle cx="5.800" cy="6.500" r="4.600" fill="#d9eaec" stroke="#555" strokeWidth="1.200" /><path d="M11.500 3.500H16M13.700 1V6M11.500 8.500H16" stroke="#333" strokeWidth="1.100" /></Ico></NavItem>
            <NavItem $w={33} $gap={4}><Ico w={17} h={16}><path d="M.5 .5H15.500V15.500H.5Z" fill="none" stroke="#777" strokeDasharray="2 2" /><path d="M11 11L15.500 15.500" stroke="#333" strokeWidth="3" /><circle cx="7.500" cy="7" r="6" fill="#cde4e0" stroke="#555" strokeWidth="1.200" /></Ico><Caret /></NavItem>
            <NavItem $w={31} $gap={2}><Ico w={16} h={16}><path d="M.7 .7H15.300V12.300H.7Z" fill="#e8eef4" stroke="#444" strokeWidth="1.200" /><path d="M3 3H13V10H3Z" fill="#8bb3e0" stroke="#27518b" /><path d="M5 13V15.300H11V13" fill="#fff" stroke="#444" strokeWidth="1.200" /></Ico><Caret /></NavItem>
            <NavItem $w={31} $gap={2}><Ico w={16} h={16}><path d="M.6 .6H15.400V15.400H.6Z" fill="#fff" stroke="#555" strokeWidth="1.200" /><path d="M3.500 0V16M6.500 0V16M9.500 0V16M12.500 0V16M0 3.500H16M0 6.500H16M0 9.500H16M0 12.500H16" stroke="#808080" /></Ico><Caret /></NavItem>
            <NavItem $w={27} $gap={2}><Ico w={16} h={14}><g fill="#b4cdea" stroke="#3b5a8a" strokeWidth="1"><rect x=".5" y=".5" width="7" height="6" rx="1" /><rect x="8.500" y=".5" width="7" height="6" rx="1" /><rect x=".5" y="7.500" width="7" height="6" rx="1" /><rect x="8.500" y="7.500" width="7" height="6" rx="1" /></g><path d="M2.500 3.500h3M10.500 3.500h3M2.500 10.500h3M10.500 10.500h3" stroke="#7fa3cf" strokeWidth="1.500" /></Ico><Caret /></NavItem>
          </NavBar>
        </Center>

        <RightColumn>
          <CubeArea><ViewCube /></CubeArea>
          <Panel>
            <PanelHead><Round /><BarTitle $x={0}>QUICK SETUP</BarTitle><Twin right /></PanelHead>
            <PanelBody>
              <Form>
                <Heading><Num>1</Num><HeadingText>SETUP</HeadingText></Heading>
                <Field $top={6}><FieldName>Default Units</FieldName><Select>mm<DropButton><Caret w={8} h={4} c="#000" /></DropButton></Select></Field>
                <Note $top={6} $ls={-0.09}>New documents will use <b>mm</b> as their default unit.</Note>
                <Heading $top={26}><Num>2</Num><HeadingText>NAVIGATE &amp; VIEW</HeadingText></Heading>
                <Note $top={6} $ls={-0.05}>Maneuver your model using familiar controls.</Note>
                <Field $top={4}><FieldName>CAD Experience</FieldName><Select>New to CAD<DropButton><Caret w={8} h={4} c="#000" /></DropButton></Select></Field>
                <MouseHead>Mouse</MouseHead>
                <ControlRow $top={-4}><ControlName>Pan</ControlName><MouseIcon /></ControlRow>
                <ControlRow><ControlName>Zoom</ControlName><MouseIcon zoom /></ControlRow>
                <ControlRow $last><ControlName>Orbit</ControlName><Key>SHIFT</Key><Plus>+</Plus><MouseIcon /></ControlRow>
              </Form>
              <Scroll><Thumb /></Scroll>
            </PanelBody>
            <PanelFoot>
              <CloseButton>Close</CloseButton>
              <Badge><Ico w={11} h={9}><path d="M0 8L6 1.500H8M3 8L8 3M6 8L10 3.500M8.500 1L11 0" stroke="#fff" strokeWidth="1.300" fill="none" /></Ico></Badge>
            </PanelFoot>
          </Panel>
        </RightColumn>
      </Canvas>

      <Timeline>
        <Playback>
          <Ico w={13} h={12}><path d="M1 0H3V12H1ZM12 0V12L3 6Z" fill="#5c5c5c" /></Ico>
          <Ico w={14} h={12}><path d="M9.500 0V12L.5 6ZM10.500 4H13V9H10.500Z" fill="#5c5c5c" /></Ico>
          <Ico w={13} h={14}><path d="M1 0L13 7L1 14Z" fill="#5c5c5c" /></Ico>
          <Ico w={14} h={12}><path d="M4.500 0V12L13.500 6ZM1 4H3.500V9H1Z" fill="#5c5c5c" /></Ico>
          <Ico w={13} h={12}><path d="M10 0H12V12H10ZM1 0V12L10 6Z" fill="#5c5c5c" /></Ico>
        </Playback>
        <Features>
          <FeatureRow>
            {FEATURES.map((F, i) => <F key={i} />)}
            <Marker><Ico w={12} h={32}><path d="M0 0H12V4L7 9V32H5V9L0 4Z" fill="#5c5c5c" /></Ico></Marker>
          </FeatureRow>
          <Rail>{FEATURES.map((_, i) => <Tick key={i} />)}</Rail>
        </Features>
        <GearSlot><Gear s={15} /></GearSlot>
      </Timeline>
      <Wallpaper />
    </Window>
  );
}
